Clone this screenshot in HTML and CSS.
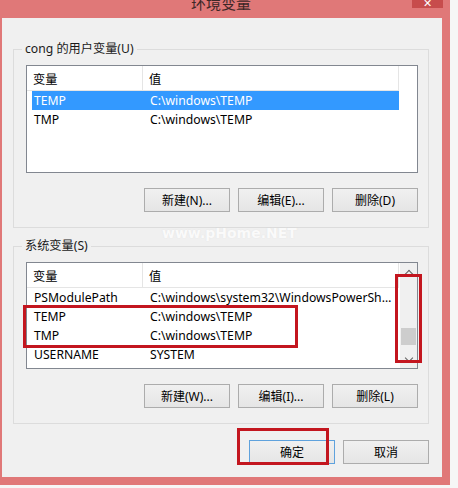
FILE: index.html
```html
<!DOCTYPE html>
<html lang="zh-CN">
<head>
<meta charset="utf-8">
<title>环境变量</title>
<link rel="stylesheet" href="styles.css">
</head>
<body>
<div class="window">
  <div class="titlebar">
    <span class="title">环境变量</span>
    <span class="close">✕</span>
  </div>
  <div class="client">
    <div class="group g1">
      <div class="legend">cong 的用户变量(U)</div>
      <div class="list">
        <div class="lv-main">
          <div class="lv-header"><div class="c1">变量</div><div class="c2">值</div></div>
          <div class="row sel"><div class="c1">TEMP</div><div class="c2">C:\windows\TEMP</div></div>
          <div class="row"><div class="c1">TMP</div><div class="c2">C:\windows\TEMP</div></div>
        </div>
      </div>
      <div class="btns">
        <button class="btn">新建(N)...</button>
        <button class="btn">编辑(E)...</button>
        <button class="btn">删除(D)</button>
      </div>
    </div>
    <div class="group g2">
      <div class="legend">系统变量(S)</div>
      <div class="list">
        <div class="lv-main">
          <div class="lv-header"><div class="c1">变量</div><div class="c2">值</div></div>
          <div class="row"><div class="c1">PSModulePath</div><div class="c2">C:\windows\system32\WindowsPowerShell\v1.0\Modules\</div></div>
          <div class="row"><div class="c1">TEMP</div><div class="c2">C:\windows\TEMP</div></div>
          <div class="row"><div class="c1">TMP</div><div class="c2">C:\windows\TEMP</div></div>
          <div class="row"><div class="c1">USERNAME</div><div class="c2">SYSTEM</div></div>
          <div class="row"><div class="c1">windir</div><div class="c2">C:\windows</div></div>
        </div>
        <div class="vscroll">
          <span class="arrow up"></span>
          <span class="track"><span class="thumb"></span></span>
          <span class="arrow down"></span>
        </div>
      </div>
      <div class="btns">
        <button class="btn">新建(W)...</button>
        <button class="btn">编辑(I)...</button>
        <button class="btn">删除(L)</button>
      </div>
    </div>
    <div class="dlg-btns">
      <button class="btn default">确定</button>
      <button class="btn">取消</button>
    </div>
  </div>
</div>
<div class="watermark">www.pHome.NET</div>
<div class="mark mark-rows"></div>
<div class="mark mark-scroll"></div>
<div class="mark mark-ok"></div>
</body>
</html>
```

FILE: styles.css
```css
* { box-sizing: border-box; }

body {
  margin: 0;
  width: 458px;
  height: 488px;
  overflow: hidden;
  position: relative;
  background: #f6f6f6;
  font-family: "Noto Sans", "Noto Sans CJK SC", sans-serif;
  font-size: 12.2px;
  color: #000;
}

.window {
  width: 450px;
  height: 485px;
  background: #e07878;
  display: flex;
  flex-direction: column;
  padding: 0 8px 8px 2px;
}

.titlebar {
  height: 18px;
  position: relative;
  overflow: hidden;
  display: flex;
  justify-content: center;
  margin: 0 -8px 0 -2px;
}

.title {
  font-family: "Noto Sans CJK SC", sans-serif;
  font-size: 15px;
  line-height: 18px;
  margin-top: -6px;
  margin-right: 8px;
  color: #3d2727;
}

.close {
  position: absolute;
  top: 0;
  right: 7px;
  width: 31px;
  height: 8px;
  background: #c74c4c;
  color: #fff;
  font-size: 11px;
  line-height: 6px;
  text-align: center;
  overflow: hidden;
}

.client {
  flex: 1;
  background: #f0f0f0;
  padding: 0 13px 0 11px;
  display: flex;
  flex-direction: column;
}

.group {
  border: 1px solid #dcdcdc;
  padding: 0 10px 15px 12px;
  display: flex;
  flex-direction: column;
}

.g1 { margin-top: 31px; }
.g2 { margin-top: 18px; }

.legend {
  align-self: flex-start;
  margin: -9px 0 0 -4px;
  padding: 0 3px 0 3px;
  background: #f0f0f0;
  line-height: 16px;
  height: 16px;
  color: #1a1a1a;
}

.list {
  margin-top: 8px;
  height: 108px;
  border: 1px solid #828790;
  background: #fff;
  display: flex;
  overflow: hidden;
}

.g2 .list { height: 107px; }

.lv-main {
  flex: 1;
  min-width: 0;
  display: flex;
  flex-direction: column;
}

.lv-header {
  height: 25px;
  width: 372px;
  display: flex;
  align-items: center;
  border-bottom: 1px solid #e5e5e5;
  flex-shrink: 0;
}

.lv-header .c1 {
  width: 116px;
  padding: 2px 0 0 6px;
  height: 100%;
  display: flex;
  align-items: center;
  border-right: 1px solid #e5e5e5;
}

.lv-header .c2 {
  flex: 1;
  padding: 2px 0 0 6px;
  height: 100%;
  display: flex;
  align-items: center;
  border-right: 1px solid #e5e5e5;
}

.row {
  height: 19px;
  flex-shrink: 0;
  margin-left: 5px;
  width: 367px;
  display: flex;
  align-items: center;
  white-space: nowrap;
}

.row .c1 {
  width: 111px;
  padding-left: 2px;
}

.row .c2 {
  flex: 1;
  min-width: 0;
  padding-left: 7px;
  padding-right: 6px;
  overflow: hidden;
  text-overflow: ellipsis;
}

.row.sel {
  background: #3399ff;
  color: #fff;
}

.vscroll {
  width: 17px;
  background: #f0f0f0;
  display: flex;
  flex-direction: column;
  align-items: center;
}

.arrow {
  width: 17px;
  height: 17px;
  display: flex;
  align-items: center;
  justify-content: center;
}

.arrow::before {
  content: "";
  width: 5px;
  height: 5px;
  border-left: 1.5px solid #606060;
  border-top: 1.5px solid #606060;
}

.arrow.up::before { transform: translateY(2px) rotate(45deg); }
.arrow.down::before { transform: translateY(-2px) rotate(225deg); }

.track {
  flex: 1;
  width: 100%;
  display: flex;
  flex-direction: column;
  justify-content: flex-end;
  padding: 0 1px 6px 1px;
}

.thumb {
  height: 17px;
  background: #cdcdcd;
}

.btns {
  margin-top: 15px;
  display: flex;
  justify-content: flex-end;
  gap: 8px;
}

.btn {
  width: 86px;
  height: 24px;
  border: 1px solid #acacac;
  background: linear-gradient(#f0f0f0, #e5e5e5);
  font-family: "Noto Sans", "Noto Sans CJK SC", sans-serif;
  font-size: 12px;
  color: #000;
  padding: 0;
}

.btn.default {
  border-color: #5fa2dd;
}

.dlg-btns {
  margin-top: 16px;
  display: flex;
  justify-content: flex-end;
  gap: 8px;
}

.watermark {
  position: absolute;
  left: 162px;
  top: 225px;
  font-family: "DejaVu Sans", sans-serif;
  font-weight: bold;
  font-size: 14px;
  color: rgba(255, 255, 255, 0.85);
  text-shadow: 0 0 1px rgba(210, 210, 210, 0.5);
}

.mark {
  position: absolute;
  border: 3px solid #c3161f;
}

.mark-rows { left: 23px; top: 305px; width: 275px; height: 43px; }
.mark-scroll { left: 395px; top: 274px; width: 27px; height: 89px; }
.mark-ok { left: 237px; top: 428px; width: 92px; height: 37px; }
```
